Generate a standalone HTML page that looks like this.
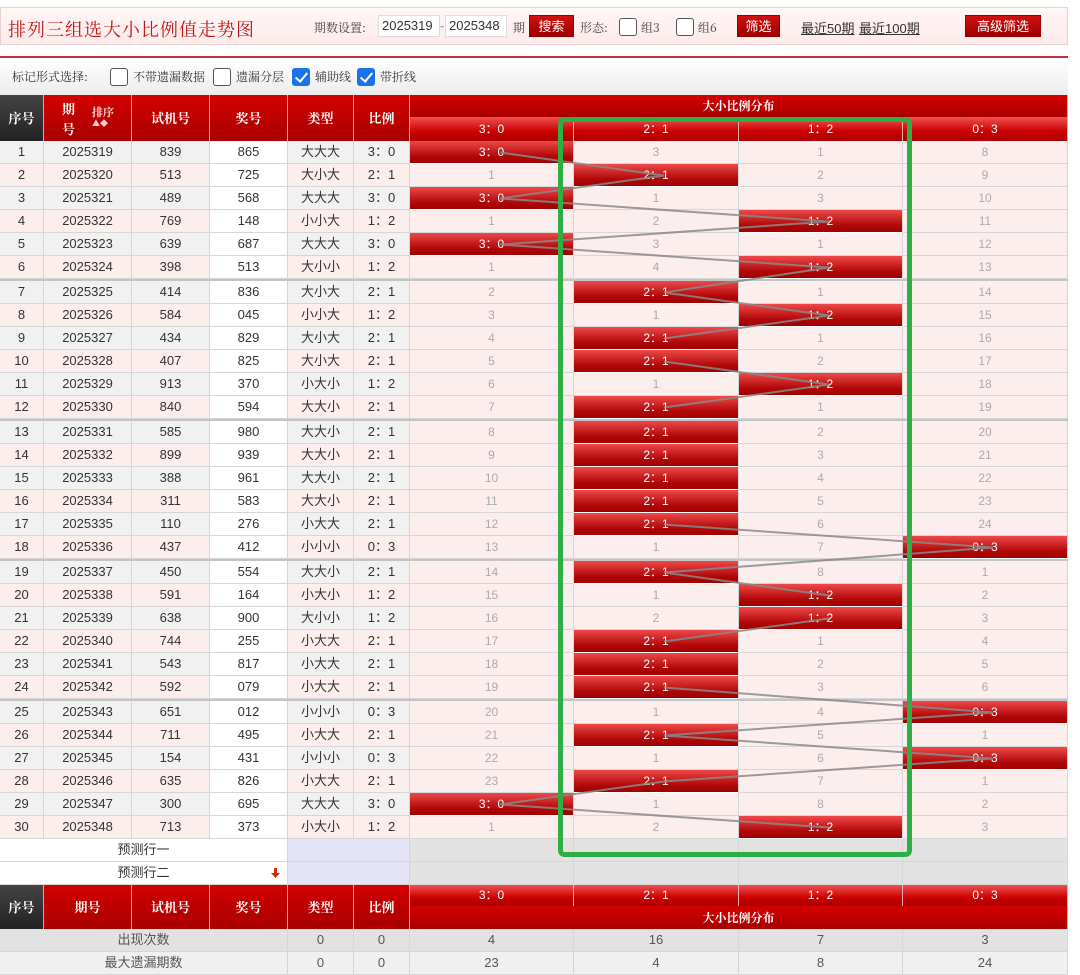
<!DOCTYPE html>
<html><head><meta charset="utf-8">
<style>
*{box-sizing:border-box;margin:0;padding:0}
body{width:1080px;height:962px;overflow:hidden;background:#fff;font-family:"Liberation Sans","Noto Sans CJK SC",sans-serif;font-size:13px;color:#333;position:relative}
.top{position:absolute;left:0;top:7px;width:1068px;height:38px;background:linear-gradient(#fff6f6,#fdeaea);border:1px solid #ecd0d0}
.title{position:absolute;left:7px;top:8px;font-size:18px;color:#c01818;font-family:"Noto Serif CJK SC","Liberation Serif",serif;letter-spacing:1px}
.lbl{position:absolute;top:11px;font-size:12px;color:#444;font-family:"Noto Serif CJK SC",serif}
.inp{position:absolute;top:7px;height:22px;width:62px;background:#fff;border:1px solid #ddd;font-size:13px;line-height:20px;padding-left:3px;color:#333}
.btn{position:absolute;top:7px;height:22px;background:linear-gradient(#d01010,#a00000);color:#fff;font-size:13px;line-height:22px;text-align:center;border:1px solid #900}
.cb{position:absolute;width:18px;height:18px;border:1.5px solid #555;border-radius:3px;background:#fff}
.cb.on{background:#1a73e8;border-color:#1a73e8}
.cb.on::after{content:"";position:absolute;left:5px;top:1px;width:5px;height:10px;border:solid #fff;border-width:0 2.5px 2.5px 0;transform:rotate(40deg)}
.lnk{position:absolute;top:10px;font-size:13px;color:#333;text-decoration:underline}
.redline{position:absolute;left:0;top:56px;width:1068px;height:2px;background:#c03030}
.mark{position:absolute;left:0;top:58px;width:1068px;height:37px;background:linear-gradient(#fff,#ececec)}
.mark span{position:absolute;top:10px;font-size:12px;color:#333;font-family:"Noto Serif CJK SC",serif}
.row{position:absolute;left:0;height:23px;display:flex;width:1068px}
.row div{height:23px;border-right:1px solid #d6d6d6;border-bottom:1px solid #d6d6d6;text-align:center;line-height:22px;flex:none;white-space:nowrap}
.w0{width:44px}.w1{width:88px}.w2{width:78px}.w3{width:78px}.w4{width:66px}.w5{width:56px}.wa{width:164px}.wb{width:165px}.wc{width:164px}.wd{width:165px}
.o div{background:#f1f1f1}.e div{background:#fdeeee}
.row div.j{background:#fff}
.row div.t{background:#fdeeee;color:#aaa;font-size:12px}
.row div.h{background:linear-gradient(#ef4848,#b00808 70%,#a00000);color:#fff;font-size:12px;border-bottom-color:#fff}
.sep{position:absolute;left:0;width:1068px;height:2px;background:#c4c4c4}
.hd{position:absolute;background:linear-gradient(#d40000,#a80000);color:#fff;font-weight:bold;text-align:center;border-right:1px solid #e8a0a0;font-family:"Noto Serif CJK SC",serif;font-size:13px}
.hd2{position:absolute;background:linear-gradient(#f05050,#c00 60%,#a00);color:#fff;text-align:center;font-size:12px;border-right:1px solid #f0b0b0}
svg{position:absolute;left:0;top:0}
</style></head><body>
<div class="top">
<div class="title">排列三组选大小比例值走势图</div>
<span class="lbl" style="left:313px">期数设置:</span>
<div class="inp" style="left:377px">2025319</div>
<span class="lbl" style="left:439px;top:9px">-</span>
<div class="inp" style="left:444px">2025348</div>
<span class="lbl" style="left:512px">期</span>
<div class="btn" style="left:528px;width:45px">搜索</div>
<span class="lbl" style="left:579px">形态:</span>
<div class="cb" style="left:618px;top:10px"></div><span class="lbl" style="left:640px">组3</span>
<div class="cb" style="left:675px;top:10px"></div><span class="lbl" style="left:697px">组6</span>
<div class="btn" style="left:736px;width:43px">筛选</div>
<span class="lnk" style="left:800px">最近50期</span><span class="lnk" style="left:858px">最近100期</span>
<div class="btn" style="left:964px;width:76px">高级筛选</div>
</div>
<div class="redline"></div>
<div class="mark">
<span style="left:12px">标记形式选择:</span>
<div class="cb" style="left:110px;top:10px"></div><span style="left:133px">不带遗漏数据</span>
<div class="cb" style="left:213px;top:10px"></div><span style="left:236px">遗漏分层</span>
<div class="cb on" style="left:292px;top:10px"></div><span style="left:315px">辅助线</span>
<div class="cb on" style="left:357px;top:10px"></div><span style="left:380px">带折线</span>
</div>
<div class="hd" style="left:0;top:95px;width:44px;height:46px;line-height:46px;background:linear-gradient(#444,#222)">序号</div>
<div class="hd" style="left:44px;top:95px;width:88px;height:46px"><span style="position:absolute;left:18px;top:4px">期</span><span style="position:absolute;left:18px;top:24px">号</span><span style="position:absolute;left:48px;top:9px;font-size:11px;color:#fdd">排序</span><span style="position:absolute;left:48px;top:23px;font-size:8px;color:#fcc">▲◆</span></div>
<div class="hd" style="left:132px;top:95px;width:78px;height:46px;line-height:46px">试机号</div>
<div class="hd" style="left:210px;top:95px;width:78px;height:46px;line-height:46px">奖号</div>
<div class="hd" style="left:288px;top:95px;width:66px;height:46px;line-height:46px">类型</div>
<div class="hd" style="left:354px;top:95px;width:56px;height:46px;line-height:46px">比例</div>
<div class="hd" style="left:410px;top:95px;width:658px;height:22px;line-height:22px;font-size:12px">大小比例分布</div>
<div class="hd2" style="left:410px;top:117px;width:164px;height:24px;line-height:24px">3：0</div>
<div class="hd2" style="left:574px;top:117px;width:165px;height:24px;line-height:24px">2：1</div>
<div class="hd2" style="left:739px;top:117px;width:164px;height:24px;line-height:24px">1：2</div>
<div class="hd2" style="left:903px;top:117px;width:165px;height:24px;line-height:24px">0：3</div>

<div class="row o" style="top:141px"><div class="w0">1</div><div class="w1">2025319</div><div class="w2">839</div><div class="w3 j">865</div><div class="w4">大大大</div><div class="w5">3：0</div><div class="wa h">3：0</div><div class="wb t">3</div><div class="wc t">1</div><div class="wd t">8</div></div>
<div class="row e" style="top:164px"><div class="w0">2</div><div class="w1">2025320</div><div class="w2">513</div><div class="w3 j">725</div><div class="w4">大小大</div><div class="w5">2：1</div><div class="wa t">1</div><div class="wb h">2：1</div><div class="wc t">2</div><div class="wd t">9</div></div>
<div class="row o" style="top:187px"><div class="w0">3</div><div class="w1">2025321</div><div class="w2">489</div><div class="w3 j">568</div><div class="w4">大大大</div><div class="w5">3：0</div><div class="wa h">3：0</div><div class="wb t">1</div><div class="wc t">3</div><div class="wd t">10</div></div>
<div class="row e" style="top:210px"><div class="w0">4</div><div class="w1">2025322</div><div class="w2">769</div><div class="w3 j">148</div><div class="w4">小小大</div><div class="w5">1：2</div><div class="wa t">1</div><div class="wb t">2</div><div class="wc h">1：2</div><div class="wd t">11</div></div>
<div class="row o" style="top:233px"><div class="w0">5</div><div class="w1">2025323</div><div class="w2">639</div><div class="w3 j">687</div><div class="w4">大大大</div><div class="w5">3：0</div><div class="wa h">3：0</div><div class="wb t">3</div><div class="wc t">1</div><div class="wd t">12</div></div>
<div class="row e" style="top:256px"><div class="w0">6</div><div class="w1">2025324</div><div class="w2">398</div><div class="w3 j">513</div><div class="w4">大小小</div><div class="w5">1：2</div><div class="wa t">1</div><div class="wb t">4</div><div class="wc h">1：2</div><div class="wd t">13</div></div>
<div class="sep" style="top:279px"></div>
<div class="row o" style="top:281px"><div class="w0">7</div><div class="w1">2025325</div><div class="w2">414</div><div class="w3 j">836</div><div class="w4">大小大</div><div class="w5">2：1</div><div class="wa t">2</div><div class="wb h">2：1</div><div class="wc t">1</div><div class="wd t">14</div></div>
<div class="row e" style="top:304px"><div class="w0">8</div><div class="w1">2025326</div><div class="w2">584</div><div class="w3 j">045</div><div class="w4">小小大</div><div class="w5">1：2</div><div class="wa t">3</div><div class="wb t">1</div><div class="wc h">1：2</div><div class="wd t">15</div></div>
<div class="row o" style="top:327px"><div class="w0">9</div><div class="w1">2025327</div><div class="w2">434</div><div class="w3 j">829</div><div class="w4">大小大</div><div class="w5">2：1</div><div class="wa t">4</div><div class="wb h">2：1</div><div class="wc t">1</div><div class="wd t">16</div></div>
<div class="row e" style="top:350px"><div class="w0">10</div><div class="w1">2025328</div><div class="w2">407</div><div class="w3 j">825</div><div class="w4">大小大</div><div class="w5">2：1</div><div class="wa t">5</div><div class="wb h">2：1</div><div class="wc t">2</div><div class="wd t">17</div></div>
<div class="row o" style="top:373px"><div class="w0">11</div><div class="w1">2025329</div><div class="w2">913</div><div class="w3 j">370</div><div class="w4">小大小</div><div class="w5">1：2</div><div class="wa t">6</div><div class="wb t">1</div><div class="wc h">1：2</div><div class="wd t">18</div></div>
<div class="row e" style="top:396px"><div class="w0">12</div><div class="w1">2025330</div><div class="w2">840</div><div class="w3 j">594</div><div class="w4">大大小</div><div class="w5">2：1</div><div class="wa t">7</div><div class="wb h">2：1</div><div class="wc t">1</div><div class="wd t">19</div></div>
<div class="sep" style="top:419px"></div>
<div class="row o" style="top:421px"><div class="w0">13</div><div class="w1">2025331</div><div class="w2">585</div><div class="w3 j">980</div><div class="w4">大大小</div><div class="w5">2：1</div><div class="wa t">8</div><div class="wb h">2：1</div><div class="wc t">2</div><div class="wd t">20</div></div>
<div class="row e" style="top:444px"><div class="w0">14</div><div class="w1">2025332</div><div class="w2">899</div><div class="w3 j">939</div><div class="w4">大大小</div><div class="w5">2：1</div><div class="wa t">9</div><div class="wb h">2：1</div><div class="wc t">3</div><div class="wd t">21</div></div>
<div class="row o" style="top:467px"><div class="w0">15</div><div class="w1">2025333</div><div class="w2">388</div><div class="w3 j">961</div><div class="w4">大大小</div><div class="w5">2：1</div><div class="wa t">10</div><div class="wb h">2：1</div><div class="wc t">4</div><div class="wd t">22</div></div>
<div class="row e" style="top:490px"><div class="w0">16</div><div class="w1">2025334</div><div class="w2">311</div><div class="w3 j">583</div><div class="w4">大大小</div><div class="w5">2：1</div><div class="wa t">11</div><div class="wb h">2：1</div><div class="wc t">5</div><div class="wd t">23</div></div>
<div class="row o" style="top:513px"><div class="w0">17</div><div class="w1">2025335</div><div class="w2">110</div><div class="w3 j">276</div><div class="w4">小大大</div><div class="w5">2：1</div><div class="wa t">12</div><div class="wb h">2：1</div><div class="wc t">6</div><div class="wd t">24</div></div>
<div class="row e" style="top:536px"><div class="w0">18</div><div class="w1">2025336</div><div class="w2">437</div><div class="w3 j">412</div><div class="w4">小小小</div><div class="w5">0：3</div><div class="wa t">13</div><div class="wb t">1</div><div class="wc t">7</div><div class="wd h">0：3</div></div>
<div class="sep" style="top:559px"></div>
<div class="row o" style="top:561px"><div class="w0">19</div><div class="w1">2025337</div><div class="w2">450</div><div class="w3 j">554</div><div class="w4">大大小</div><div class="w5">2：1</div><div class="wa t">14</div><div class="wb h">2：1</div><div class="wc t">8</div><div class="wd t">1</div></div>
<div class="row e" style="top:584px"><div class="w0">20</div><div class="w1">2025338</div><div class="w2">591</div><div class="w3 j">164</div><div class="w4">小大小</div><div class="w5">1：2</div><div class="wa t">15</div><div class="wb t">1</div><div class="wc h">1：2</div><div class="wd t">2</div></div>
<div class="row o" style="top:607px"><div class="w0">21</div><div class="w1">2025339</div><div class="w2">638</div><div class="w3 j">900</div><div class="w4">大小小</div><div class="w5">1：2</div><div class="wa t">16</div><div class="wb t">2</div><div class="wc h">1：2</div><div class="wd t">3</div></div>
<div class="row e" style="top:630px"><div class="w0">22</div><div class="w1">2025340</div><div class="w2">744</div><div class="w3 j">255</div><div class="w4">小大大</div><div class="w5">2：1</div><div class="wa t">17</div><div class="wb h">2：1</div><div class="wc t">1</div><div class="wd t">4</div></div>
<div class="row o" style="top:653px"><div class="w0">23</div><div class="w1">2025341</div><div class="w2">543</div><div class="w3 j">817</div><div class="w4">小大大</div><div class="w5">2：1</div><div class="wa t">18</div><div class="wb h">2：1</div><div class="wc t">2</div><div class="wd t">5</div></div>
<div class="row e" style="top:676px"><div class="w0">24</div><div class="w1">2025342</div><div class="w2">592</div><div class="w3 j">079</div><div class="w4">小大大</div><div class="w5">2：1</div><div class="wa t">19</div><div class="wb h">2：1</div><div class="wc t">3</div><div class="wd t">6</div></div>
<div class="sep" style="top:699px"></div>
<div class="row o" style="top:701px"><div class="w0">25</div><div class="w1">2025343</div><div class="w2">651</div><div class="w3 j">012</div><div class="w4">小小小</div><div class="w5">0：3</div><div class="wa t">20</div><div class="wb t">1</div><div class="wc t">4</div><div class="wd h">0：3</div></div>
<div class="row e" style="top:724px"><div class="w0">26</div><div class="w1">2025344</div><div class="w2">711</div><div class="w3 j">495</div><div class="w4">小大大</div><div class="w5">2：1</div><div class="wa t">21</div><div class="wb h">2：1</div><div class="wc t">5</div><div class="wd t">1</div></div>
<div class="row o" style="top:747px"><div class="w0">27</div><div class="w1">2025345</div><div class="w2">154</div><div class="w3 j">431</div><div class="w4">小小小</div><div class="w5">0：3</div><div class="wa t">22</div><div class="wb t">1</div><div class="wc t">6</div><div class="wd h">0：3</div></div>
<div class="row e" style="top:770px"><div class="w0">28</div><div class="w1">2025346</div><div class="w2">635</div><div class="w3 j">826</div><div class="w4">小大大</div><div class="w5">2：1</div><div class="wa t">23</div><div class="wb h">2：1</div><div class="wc t">7</div><div class="wd t">1</div></div>
<div class="row o" style="top:793px"><div class="w0">29</div><div class="w1">2025347</div><div class="w2">300</div><div class="w3 j">695</div><div class="w4">大大大</div><div class="w5">3：0</div><div class="wa h">3：0</div><div class="wb t">1</div><div class="wc t">8</div><div class="wd t">2</div></div>
<div class="row e" style="top:816px"><div class="w0">30</div><div class="w1">2025348</div><div class="w2">713</div><div class="w3 j">373</div><div class="w4">小大小</div><div class="w5">1：2</div><div class="wa t">1</div><div class="wb t">2</div><div class="wc h">1：2</div><div class="wd t">3</div></div>

<div class="row" style="top:839px"><div style="width:288px;background:#fff;position:relative">预测行一</div><div style="width:122px;background:#e4e4f6"></div><div class="wa" style="background:#e2e2e2"></div><div class="wb" style="background:#e2e2e2"></div><div class="wc" style="background:#e2e2e2"></div><div class="wd" style="background:#e2e2e2"></div></div>
<div class="row" style="top:862px"><div style="width:288px;background:#fff;position:relative">预测行二<svg style="position:absolute;left:271px;top:6px" width="9" height="10" viewBox="0 0 9 10"><path d="M3 0h3v5h3L4.5 10 0 5h3z" fill="#d03010"/></svg></div><div style="width:122px;background:#e4e4f6"></div><div class="wa" style="background:#e2e2e2"></div><div class="wb" style="background:#e2e2e2"></div><div class="wc" style="background:#e2e2e2"></div><div class="wd" style="background:#e2e2e2"></div></div>

<div class="hd" style="left:0;top:885px;width:44px;height:44px;line-height:44px;background:linear-gradient(#444,#222)">序号</div>
<div class="hd" style="left:44px;top:885px;width:88px;height:44px;line-height:44px">期号</div>
<div class="hd" style="left:132px;top:885px;width:78px;height:44px;line-height:44px">试机号</div>
<div class="hd" style="left:210px;top:885px;width:78px;height:44px;line-height:44px">奖号</div>
<div class="hd" style="left:288px;top:885px;width:66px;height:44px;line-height:44px">类型</div>
<div class="hd" style="left:354px;top:885px;width:56px;height:44px;line-height:44px">比例</div>
<div class="hd2" style="left:410px;top:885px;width:164px;height:21px;line-height:21px">3：0</div>
<div class="hd2" style="left:574px;top:885px;width:165px;height:21px;line-height:21px">2：1</div>
<div class="hd2" style="left:739px;top:885px;width:164px;height:21px;line-height:21px">1：2</div>
<div class="hd2" style="left:903px;top:885px;width:165px;height:21px;line-height:21px">0：3</div>
<div class="hd" style="left:410px;top:906px;width:658px;height:23px;line-height:23px;font-size:12px">大小比例分布</div>

<div class="row" style="top:929px;color:#555"><div style="width:288px;background:#e2e2e2">出现次数</div><div class="w4" style="background:#e2e2e2">0</div><div class="w5" style="background:#e2e2e2">0</div><div class="wa" style="background:#e2e2e2">4</div><div class="wb" style="background:#e2e2e2">16</div><div class="wc" style="background:#e2e2e2">7</div><div class="wd" style="background:#e2e2e2">3</div></div>
<div class="row" style="top:952px;color:#555"><div style="width:288px;background:#f0f0f0">最大遗漏期数</div><div class="w4" style="background:#f0f0f0">0</div><div class="w5" style="background:#f0f0f0">0</div><div class="wa" style="background:#f0f0f0">23</div><div class="wb" style="background:#f0f0f0">4</div><div class="wc" style="background:#f0f0f0">8</div><div class="wd" style="background:#f0f0f0">24</div></div>

<svg width="1080" height="962" viewBox="0 0 1080 962">
<path fill="none" stroke="#8a8a8a" stroke-width="2" opacity="0.85" d="M500 152.5L664 175.5L500 198.5L829 221.5L500 244.5L829 267.5L664 292.5L829 315.5L664 338.5 M664 361.5L829 384.5L664 407.5 M664 524.5L993 547.5L664 572.5L829 595.5 M829 618.5L664 641.5 M664 687.5L993 712.5L664 735.5L993 758.5L664 781.5L500 804.5L829 827.5"/>
<rect x="560.5" y="119.5" width="349" height="735" rx="4" fill="none" stroke="#2eae44" stroke-width="5"/>
</svg>
</body></html>
